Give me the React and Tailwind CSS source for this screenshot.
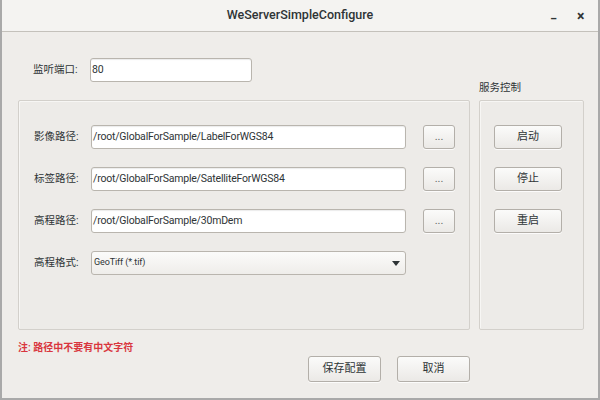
import React from "react";

const font = { fontFamily: 'Roboto, "Noto Sans CJK SC", sans-serif' };

function Btn({ children, className = "" }) {
  return (
    <div
      className={
        "flex items-center justify-center rounded-[3px] border border-[#b3afa9] bg-gradient-to-b from-[#fbfbfa] to-[#ebe9e6] text-[11px] text-[#2e3436] shadow-[0_1px_0_rgba(255,255,255,0.8)] " +
        className
      }
    >
      {children}
    </div>
  );
}

function Field({ value, className = "" }) {
  return (
    <div
      className={
        "flex items-center rounded-[3px] border border-[#b9b5ae] bg-white pl-[1px] text-[10.5px] tracking-[-0.2px] text-[#2e3436] shadow-[inset_0_1px_1px_rgba(0,0,0,0.08)] " +
        className
      }
    >
      {value}
    </div>
  );
}

function PathRow({ label, value }) {
  return (
    <div className="flex h-[24px] items-center">
      <div className="w-[57px] pl-[15px] box-content text-[10.5px] text-[#2e3436]">{label}</div>
      <Field value={value} className="h-[24px] w-[315px]" />
      <Btn className="ml-[17px] h-[24px] w-[32px] text-[#666] leading-none pb-[2px]">...</Btn>
    </div>
  );
}

export default function App() {
  return (
    <div style={font} className="flex h-[400px] w-[600px] flex-col overflow-hidden border-x-2 border-b-2 border-[#a9a9a9] bg-[#efedea]">
      <div className="relative flex h-[32px] shrink-0 items-center justify-center border-b border-[#c4c1bb] bg-[#f4f3f1]">
        <span className="text-[12.5px] font-medium text-[#2e3436]">WeServerSimpleConfigure</span>
        <span className="absolute left-[549px] top-[5px] text-[12px] font-bold text-[#2e3436]">_</span>
        <span className="absolute left-[575px] top-[6px] text-[14px] font-bold text-[#2e3436]">×</span>
      </div>
      <div className="flex flex-1 flex-col pl-[16px]">
        <div className="mt-[26px] flex h-[24px] items-center">
          <div className="w-[57px] pl-[15px] box-content text-[10.5px] text-[#2e3436]">监听端口:</div>
          <Field value="80" className="h-[24px] w-[162px]" />
        </div>
        <div className="flex">
          <div className="mt-[18px] flex h-[230px] w-[452px] flex-col gap-[18px] rounded-[2px] border border-[#d3d0cb] bg-[#edebe8] pt-[24px] shadow-[inset_1px_1px_0_#f7f6f4]">
            <PathRow label="影像路径:" value="/root/GlobalForSample/LabelForWGS84" />
            <PathRow label="标签路径:" value="/root/GlobalForSample/SatelliteForWGS84" />
            <PathRow label="高程路径:" value="/root/GlobalForSample/30mDem" />
            <div className="flex h-[24px] items-center">
              <div className="w-[57px] pl-[15px] box-content text-[10.5px] text-[#2e3436]">高程格式:</div>
              <div className="flex h-[24px] w-[315px] items-center justify-between rounded-[3px] border border-[#b9b5ae] bg-gradient-to-b from-[#fbfbfa] to-[#efedea] pl-[2px] pr-[5px] text-[9px] tracking-[-0.1px] text-[#2e3436]">
                <span>GeoTiff (*.tif)</span>
                <svg width="8" height="5" viewBox="0 0 8 5"><path d="M0 0h8L4 5z" fill="#2e3436" /></svg>
              </div>
            </div>
          </div>
          <div className="ml-[9px] flex flex-col">
            <div className="h-[18px] text-[10.5px] leading-[12px] text-[#2e3436]">服务控制</div>
            <div className="flex h-[230px] w-[105px] flex-col gap-[18px] rounded-[2px] border border-[#d3d0cb] bg-[#edebe8] pl-[14px] pt-[24px] shadow-[inset_1px_1px_0_#f7f6f4]">
              <Btn className="h-[24px] w-[68px]">启动</Btn>
              <Btn className="h-[24px] w-[68px]">停止</Btn>
              <Btn className="h-[24px] w-[68px]">重启</Btn>
            </div>
          </div>
        </div>
        <div className="mt-[11px] h-[14px] text-[10px] font-semibold leading-[14px] text-[#d9363e]">注: 路径中不要有中文字符</div>
        <div className="mt-[1px] flex pl-[290px]">
          <Btn className="h-[26px] w-[73px]">保存配置</Btn>
          <Btn className="ml-[16px] h-[26px] w-[73px]">取消</Btn>
        </div>
      </div>
    </div>
  );
}
